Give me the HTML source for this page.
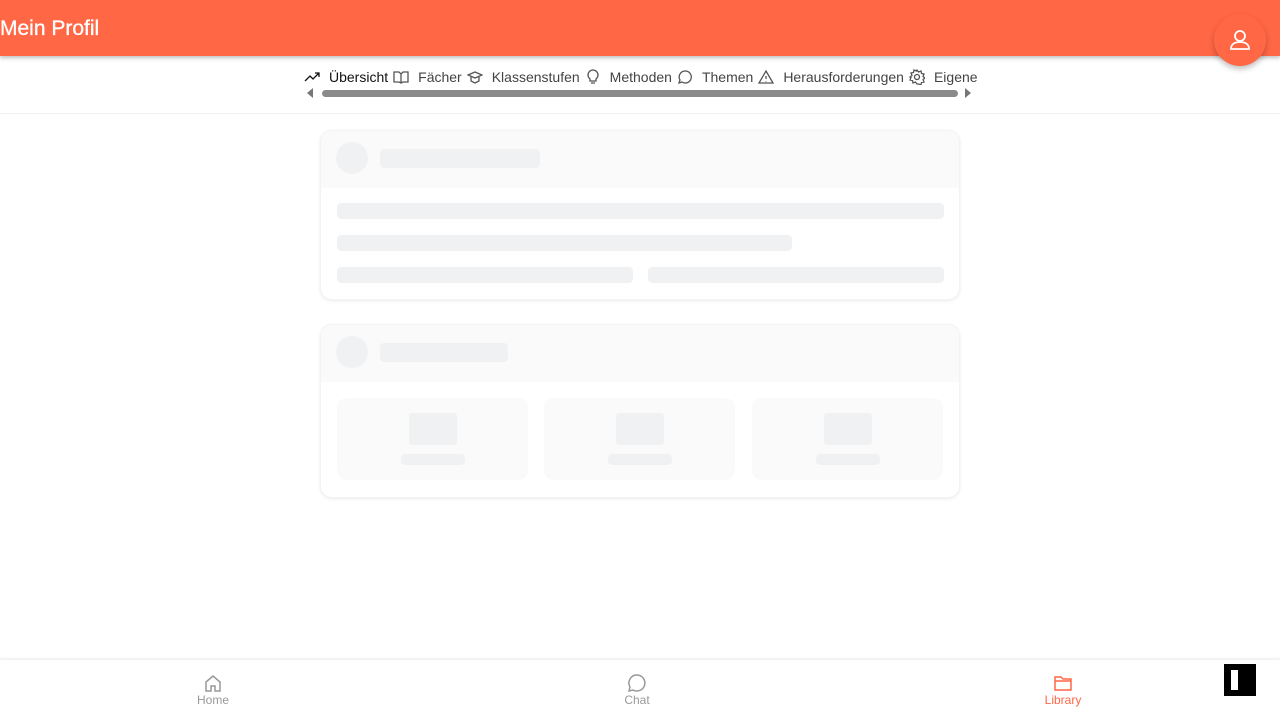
<!DOCTYPE html>
<html><head><meta charset="utf-8"><style>
*{box-sizing:border-box;margin:0;padding:0}
body{width:1280px;height:720px;overflow:hidden;background:#fff;font-family:"Liberation Sans",sans-serif;position:relative}
.hdr{position:absolute;left:0;top:0;width:1280px;height:56px;background:#FF6745;box-shadow:0 2px 4px rgba(0,0,0,.25)}
.hdr h1{position:absolute;left:0;top:17px;font-size:21px;font-weight:normal;color:#fff;line-height:24px;-webkit-text-stroke:0.3px #fff}
.av{position:absolute;left:1214px;top:14px;width:52px;height:52px;border-radius:50%;background:#FF6745;box-shadow:0 3px 6px rgba(0,0,0,.25)}
.tabs{position:absolute;left:304px;top:68px;height:18px;font-size:14px;color:#444;white-space:nowrap;display:flex;align-items:center}
.tabs span{margin:0 5px 0 9px}
.tabs svg{width:16px;height:16px;fill:none;stroke:#555;stroke-width:1.3}
.sb{position:absolute;left:322px;top:90px;width:636px;height:7px;border-radius:4px;background:#8a8a8a}
.line{position:absolute;left:0;top:113px;width:1280px;height:1px;background:#f2f2f2}
.card{position:absolute;left:320px;width:640px;border-radius:12px;background:#fff;box-shadow:0 1px 3px rgba(0,0,0,.08);border:1px solid #f3f3f3;overflow:hidden}
.ch{height:57px;background:#fafafa;position:relative}
.b{position:absolute;background:#f0f1f3;border-radius:4px}
.c{position:absolute;background:#f0f1f3;border-radius:50%;width:32px;height:32px;left:15px;top:11px}
.tile{position:absolute;top:73px;width:191px;height:82px;background:#fafafa;border-radius:10px}
.nav{position:absolute;left:0;top:660px;width:1280px;height:60px;background:#fff;box-shadow:0 -1px 3px rgba(0,0,0,.1)}
.ni{position:absolute;top:13px;text-align:center;font-size:12px;color:#999;width:60px}
.ni svg{width:20px;height:20px;fill:none;stroke:#999;stroke-width:1.5;display:block;margin:0 auto 0}
</style></head><body>
<div class="hdr"><h1>Mein Profil</h1></div>
<div class="av"><svg width="52" height="52" viewBox="0 0 52 52" fill="none" stroke="#fff" stroke-width="1.8"><circle cx="26" cy="22" r="5"/><path d="M17 35c0-5 4-7 9-7s9 2 9 7z"/></svg></div>
<div class="tabs">
<svg viewBox="0 0 16 16"><path d="M1 12l5-5 3 3 6-6M11 4h4v4" stroke="#111"/></svg><span style="color:#111">Übersicht</span>
<svg viewBox="0 0 16 16"><path d="M1 3h5l2 2 2-2h5v10h-5l-2 1-2-1H1zM8 5v9"/></svg><span>Fächer</span>
<svg viewBox="0 0 16 16"><path d="M1 6l7-3 7 3-7 3zM4 8v4l4 2 4-2V8"/></svg><span>Klassenstufen</span>
<svg viewBox="0 0 16 16"><path d="M5 10a5 5 0 1 1 6 0v2H5zM6 14h4"/></svg><span>Methoden</span>
<svg viewBox="0 0 16 16"><path d="M8 2a6 6 0 1 1-3 11l-3 1 1-3A6 6 0 0 1 8 2z"/></svg><span>Themen</span>
<svg viewBox="0 0 16 16"><path d="M8 2l7 12H1zM8 7v3M8 12v.5"/></svg><span>Herausforderungen</span>
<svg viewBox="0 0 16 16"><circle cx="8" cy="8" r="2.5"/><path d="M8 1l1.5 2 2.5-1 .5 2.5 2.5.5-1 2.5 2 1.5-2 1.5 1 2.5-2.5.5-.5 2.5-2.5-1L8 15l-1.5-2-2.5 1-.5-2.5L1 11l1-2.5L1 8l2-1.5L2 4l2.5-.5L5 1l2.5 1z"/></svg><span style="margin-right:0">Eigene</span>
</div>
<div style="position:absolute;left:307px;top:88px;width:0;height:0;border:5px solid transparent;border-right:6px solid #777;border-left:0"></div>
<div class="sb"></div>
<div style="position:absolute;left:965px;top:88px;width:0;height:0;border:5px solid transparent;border-left:6px solid #777;border-right:0"></div>
<div class="line"></div>
<div class="card" style="top:130px;height:170px"><div class="ch"><div class="c"></div><div class="b" style="left:59px;top:18px;width:160px;height:19px"></div></div>
<div class="b" style="left:16px;top:72px;width:607px;height:16px"></div>
<div class="b" style="left:16px;top:104px;width:455px;height:16px"></div>
<div class="b" style="left:16px;top:136px;width:296px;height:16px"></div>
<div class="b" style="left:327px;top:136px;width:296px;height:16px"></div></div>
<div class="card" style="top:324px;height:174px"><div class="ch"><div class="c"></div><div class="b" style="left:59px;top:18px;width:128px;height:19px"></div></div>
<div class="tile" style="left:16px"><div class="b" style="left:72px;top:15px;width:48px;height:32px;border-radius:3px"></div><div class="b" style="left:64px;top:56px;width:64px;height:11px"></div></div>
<div class="tile" style="left:223px"><div class="b" style="left:72px;top:15px;width:48px;height:32px;border-radius:3px"></div><div class="b" style="left:64px;top:56px;width:64px;height:11px"></div></div>
<div class="tile" style="left:431px"><div class="b" style="left:72px;top:15px;width:48px;height:32px;border-radius:3px"></div><div class="b" style="left:64px;top:56px;width:64px;height:11px"></div></div></div>
<div class="nav">
<div class="ni" style="left:183px"><svg viewBox="0 0 20 20"><path d="M3 9l7-6 7 6v9h-5v-5H8v5H3z"/></svg>Home</div>
<div class="ni" style="left:607px"><svg viewBox="0 0 20 20"><path d="M10 2a8 8 0 1 1-4 15l-4 1 1-4A8 8 0 0 1 10 2z"/></svg>Chat</div>
<div class="ni" style="left:1033px;color:#FF6745"><svg viewBox="0 0 20 20" style="stroke:#FF6745"><path d="M2 4h6l2 2h8v11H2zM2 8h16"/></svg>Library</div>
<div style="position:absolute;left:1224px;top:4px;width:32px;height:32px;background:#000"><div style="position:absolute;left:7px;top:6px;width:7px;height:20px;background:#fff"></div></div>
</div>
</body></html>
